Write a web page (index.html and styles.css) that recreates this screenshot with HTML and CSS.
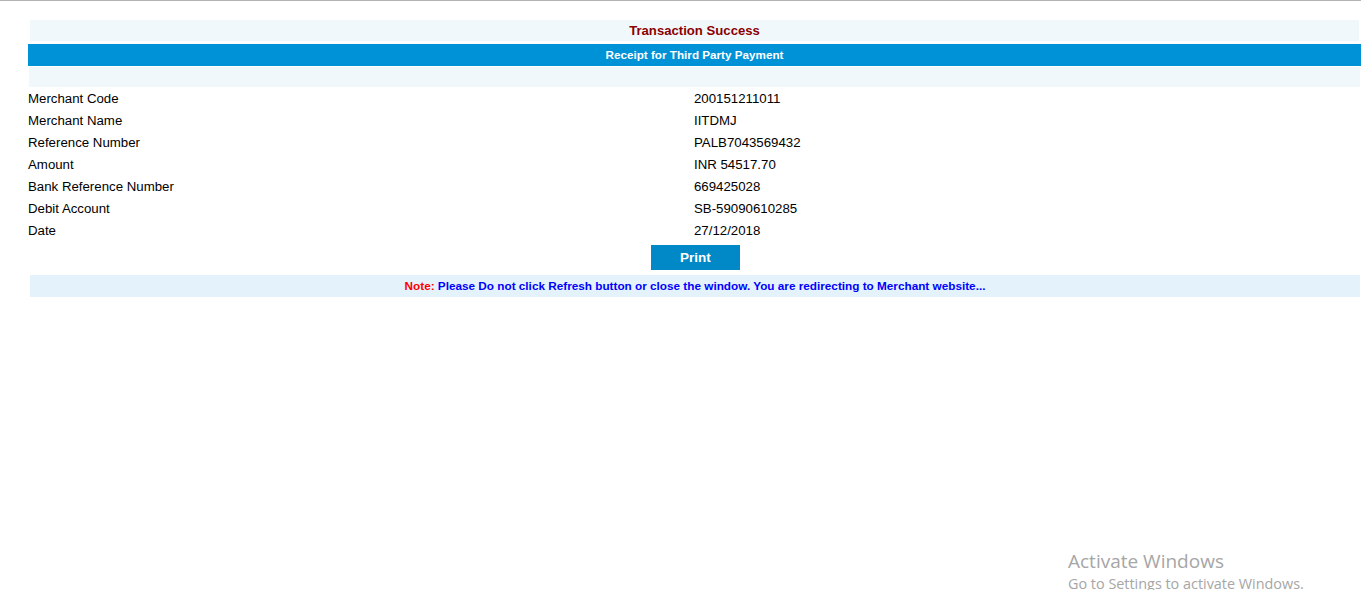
FILE: index.html
```html
<!DOCTYPE html>
<html>
<head>
<meta charset="utf-8">
<title>Transaction Success</title>
<link rel="stylesheet" href="styles.css">
</head>
<body>
<div class="page">
  <div class="receipt">
    <div class="title">Transaction Success</div>
    <div class="banner">Receipt for Third Party Payment</div>
    <div class="spacer"></div>
    <div class="details">
      <div class="row"><span class="label">Merchant Code</span><span class="value">200151211011</span></div>
      <div class="row"><span class="label">Merchant Name</span><span class="value">IITDMJ</span></div>
      <div class="row"><span class="label">Reference Number</span><span class="value">PALB7043569432</span></div>
      <div class="row"><span class="label">Amount</span><span class="value">INR 54517.70</span></div>
      <div class="row"><span class="label">Bank Reference Number</span><span class="value">669425028</span></div>
      <div class="row"><span class="label">Debit Account</span><span class="value">SB-59090610285</span></div>
      <div class="row"><span class="label">Date</span><span class="value">27/12/2018</span></div>
    </div>
    <div class="actions"><button class="print-btn" type="button">Print</button></div>
    <div class="note"><span class="note-label">Note:</span> Please Do not click Refresh button or close the window. You are redirecting to Merchant website...</div>
  </div>
</div>
<div class="watermark">
  <div class="wm-title">Activate Windows</div>
  <div class="wm-sub">Go to Settings to activate Windows.</div>
</div>
</body>
</html>
```
FILE: styles.css
```css
html, body {
  margin: 0;
  padding: 0;
  background: #ffffff;
}
body {
  border-top: 1px solid #b4b4b4;
  font-family: "Liberation Sans", Arial, sans-serif;
  color: #000;
  overflow: hidden;
  height: 589px;
  position: relative;
}
.page {
  padding-top: 19px;
  padding-left: 28px;
}
.receipt {
  width: 1333px;
}
.title {
  margin: 0 2px;
  height: 21px;
  line-height: 21px;
  background: #f0f8fc;
  color: #8b0000;
  font-weight: bold;
  font-size: 13.15px;
  text-align: center;
}
.banner {
  margin-top: 3px;
  height: 22px;
  line-height: 22px;
  background: #0092d6;
  color: #ffffff;
  font-weight: bold;
  font-size: 11.7px;
  text-align: center;
}
.spacer {
  margin: 1px 1px 0 1px;
  height: 20px;
  background: #f0f8fc;
}
.details {
  display: flex;
  flex-direction: column;
}
.row {
  display: grid;
  grid-template-columns: 666px 1fr;
  height: 21px;
  padding-top: 1px;
  line-height: 22px;
  font-size: 13.25px;
}
.actions {
  display: flex;
  justify-content: center;
  padding-top: 4px;
}
.print-btn {
  width: 89px;
  height: 25px;
  margin-left: 2px;
  border: none;
  background: #0088c7;
  color: #ffffff;
  font-family: "Liberation Sans", Arial, sans-serif;
  font-weight: bold;
  font-size: 13.5px;
  padding: 0 0 1px 0;
}
.note {
  margin: 5px 1px 0 2px;
  height: 22px;
  line-height: 22px;
  background: #e4f3fb;
  color: #0000ff;
  font-weight: bold;
  font-size: 11.75px;
  text-align: center;
}
.note-label {
  color: #ff0000;
}
.watermark {
  position: absolute;
  left: 1068px;
  top: 548px;
  color: #a6a6a6;
  font-family: "Open Sans", "Noto Sans", sans-serif;
}
.wm-title {
  font-size: 19px;
  line-height: 24px;
}
.wm-sub {
  font-size: 14.4px;
  line-height: 22px;
}
```
